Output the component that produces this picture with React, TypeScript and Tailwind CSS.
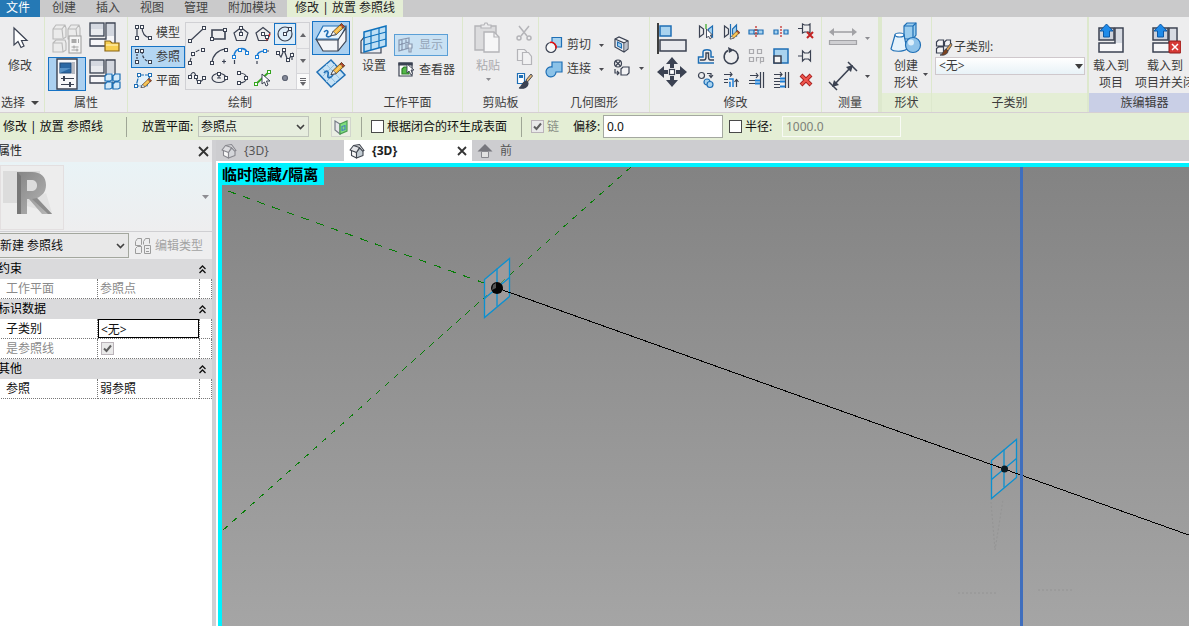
import type { ReactNode } from 'react';

const INK = '#3b4252';
const BLUE = '#1f6fb5';
const SKY = '#a9d3ef';
const FAINT = '#b4b4b8';

function Ico({ w = 18, h = 18, children }: { w?: number; h?: number; children: ReactNode }) {
  return (
    <svg width={w} height={h} viewBox={`0 0 ${w} ${h}`} fill="none" stroke={INK} strokeWidth="1.2" className="block shrink-0" aria-hidden="true">
      {children}
    </svg>
  );
}

function Node({ x, y, c = INK }: { x: number; y: number; c?: string }) {
  return <rect x={Math.floor(x) - 1.5} y={Math.floor(y) - 1.5} width="3" height="3" fill="#fff" stroke={c} strokeWidth="1" />;
}

function Pencil({ x, y, s = 1 }: { x: number; y: number; s?: number }) {
  return (
    <g transform={`translate(${x} ${y}) scale(${s})`} strokeWidth="0.8">
      <path d="M0 12 L2 8 L10 0.5 L13 3.5 L5 11 Z" fill="#f5b83d" stroke="#5b4630" />
      <path d="M8.5 2 L10 0.5 L13 3.5 L11.5 5 Z" fill="#b9452c" stroke="#5b4630" />
      <path d="M0 12 L2 8 L5 11 Z" fill="#fff" stroke="#3b4252" />
      <path d="M3.5 9.5 L10 3" stroke="#fbe2a4" />
    </g>
  );
}

function Caret({ faint = false }: { faint?: boolean }) {
  return (
    <svg width="5" height="3" viewBox="0 0 5 3" className="block shrink-0" aria-hidden="true">
      <path d="M0 0H5L2.5 3Z" fill={faint ? '#8d8d92' : '#4a4a50'} />
    </svg>
  );
}

function Chevron() {
  return (
    <svg width="9" height="6" viewBox="0 0 9 6" fill="none" stroke="#404040" strokeWidth="1.6" className="pointer-events-none absolute top-1/2 right-1 -translate-y-1/2" aria-hidden="true">
      <path d="M1 1L4.500 4.500L8 1" />
    </svg>
  );
}

function Panel({ title, width, children, foot = '', align = 'text-center' }: { title: ReactNode; width: string; children: ReactNode; foot?: string; align?: string }) {
  return (
    <section className={`flex shrink-0 flex-col border-r border-[#dde8cd] ${width}`}>
      <div className="flex h-[76px]">{children}</div>
      <div className={`h-[19px] leading-5 ${align} ${foot}`}>{title}</div>
    </section>
  );
}

function BoxesBase() {
  return (
    <g stroke={INK} strokeWidth="1.3">
      <rect x="2" y="2" width="14" height="13" fill="#d5d9e1" />
      <path d="M3 8h12v6H3Z" fill="#e9ebef" stroke="none" />
      <path d="M2 18h16V2h9v23H2Z" fill="#f7f7f9" />
      <path d="M19 3h7v12h-7Z" fill="#d3d7df" stroke="none" />
    </g>
  );
}

function TypePropsIcon() {
  return (
    <svg width="34" height="34" viewBox="0 0 34 34" fill="#ebebeb" stroke="#b9b9b9" strokeWidth="1.1" className="block shrink-0" aria-hidden="true">
      <path d="M3 7l3-4h9l1 3v9l-3 2H3ZM3 7h9l1 9M12 7l3-4" />
      <path d="M18 7l3-4h8l1 3v9l-3 2h-9ZM18 7h8l1 9M26 7l3-4" />
      <path d="M3 21l3-3h9l1 3v7l-3 2H3ZM3 21h9l1 9" />
      <rect x="19" y="14" width="12" height="17" fill="#f5f5f5" stroke="#a2a2a2" />
      <path d="M21.500 17h5v4h-5ZM28 17h1v4h-1Z" fill="#a9a9a9" stroke="none" />
      <path d="M21.500 25h7M21.500 28h7M24 23.500v3M27 26.500v3" stroke="#a2a2a2" />
    </svg>
  );
}

const drawTools: { name: string; icon: ReactNode }[] = [
  { name: '直线', icon: <Ico><path d="M2 16L16 3" /><Node x={2} y={16} /><Node x={16} y={3} /></Ico> },
  { name: '矩形', icon: <Ico><path d="M2 5h13v9H2Z" strokeWidth="1.600" /><Node x={15} y={5} /><Node x={2} y={14} /></Ico> },
  { name: '内接多边形', icon: <Ico><path d="M9 2.500L16 8L13.500 15.500H4.500L2 8Z M9 3v6" /><Node x={9} y={3} /><Node x={9} y={9} /></Ico> },
  { name: '外接多边形', icon: <Ico><path d="M9 2.500L16 8L13.500 15.500H4.500L2 8Z" /><path d="M9 9l4 4" /><path d="M16 9L12 16" stroke="#d22" strokeDasharray="3 1" strokeWidth="1.600" /><Node x={9} y={9} /><Node x={13} y={12} /></Ico> },
  { name: '圆形', icon: <Ico><circle cx="9" cy="9" r="7" /><path d="M9 9L14 4" /><Node x={9} y={9} /><Node x={14} y={4} /></Ico> },
  { name: '起点终点半径弧', icon: <Ico><path d="M2 15C3 8 8 3 15 2" strokeDasharray="4 2" /><Node x={2} y={16} /><Node x={5} y={7} /><Node x={15} y={3} /></Ico> },
  { name: '圆心端点弧', icon: <Ico><path d="M2 15C3 8 8 3 15 2" /><Node x={2} y={16} /><Node x={16} y={3} /><path d="M12 14.500h4M14 12.500v4" /></Ico> },
  { name: '相切弧', icon: <Ico><path d="M2.500 17v-4" /><path d="M2 9C3 0 13 0 15 5" stroke="#1c7ed6" strokeWidth="1.600" /><Node x={2} y={10} c="#1c7ed6" /><Node x={8} y={3} c="#1c7ed6" /><Node x={15} y={6} c="#1c7ed6" /></Ico> },
  { name: '圆角弧', icon: <Ico><path d="M3 17v-4M12 4h4" strokeDasharray="3 1" /><path d="M3 10C3 6 6 4 11 4" stroke="#1c7ed6" strokeWidth="1.600" /><Node x={3} y={10} c="#1c7ed6" /><Node x={11} y={4} c="#1c7ed6" /></Ico> },
  { name: '样条曲线', icon: <Ico><path d="M2 6L5 10L8 3L12 14L16 7V13" /><Node x={2} y={6} /><Node x={8} y={3} /><Node x={12} y={13} /><Node x={16} y={8} /></Ico> },
  { name: '通过点的样条曲线', icon: <Ico><path d="M2 8C4 2 7 2 8 8S12 15 16 9" /><Node x={2} y={8} /><Node x={8} y={8} /><Node x={11} y={13} /><Node x={16} y={9} /></Ico> },
  { name: '椭圆', icon: <Ico><ellipse cx="9" cy="9" rx="7" ry="4.500" /><path d="M9 9v-5M7 9h4" /><Node x={9} y={5} /><Node x={16} y={9} /></Ico> },
  { name: '半椭圆', icon: <Ico><path d="M7 4C17 4 17 14 7 14" /><Node x={7} y={4} /><Node x={14} y={9} /><Node x={7} y={14} /></Ico> },
  { name: '拾取线', icon: <Ico><path d="M2 15L15 3" stroke="#35a51f" strokeWidth="1.800" /><Node x={2} y={15} c="#35a51f" /><Node x={15} y={3} c="#35a51f" /><path d="M8 5v10l2.500-2 1.500 4 2-1-1.500-4H16Z" fill="#fff" strokeWidth="1" /></Ico> },
  { name: '点图元', icon: <Ico><circle cx="9" cy="9" r="2.500" fill="#858a99" stroke="#5d6372" /></Ico> },
];

const modifyTools: { name: string; icon: ReactNode }[] = [
  { name: '镜像拾取轴', icon: <Ico><path d="M2.500 3L6.500 6V11L2.500 14Z" fill="#eee" /><path d="M15.500 3L11.500 6V11L15.500 14Z" fill={SKY} stroke={BLUE} /><path d="M9 1v5" stroke="#35a51f" /><path d="M9.500 6v9l2-2 1.500 3 1.500-1-1-3h2Z" fill="#fff" strokeWidth="0.900" /></Ico> },
  { name: '镜像绘制轴', icon: <Ico><path d="M2.500 3L6.500 6V11L2.500 14Z" fill="#eee" /><path d="M14.500 2L10.500 6V11L14.500 13Z" fill={SKY} stroke={BLUE} /><path d="M8.500 1v14" stroke={BLUE} /><Pencil x={8} y={7} s={0.75} /></Ico> },
  { name: '拆分图元', icon: <Ico><path d="M2 7h5v4H2ZM11 7h5v4h-5Z" fill={SKY} stroke={BLUE} /><path d="M7 7h4M7 11h4" /><path d="M9 3v12" stroke="#c02020" strokeDasharray="2 1" /></Ico> },
  { name: '用间隙拆分', icon: <Ico><path d="M2 7h4v4H2ZM12 7h4v4h-4Z" fill={SKY} stroke={BLUE} /><path d="M9 3v12" stroke="#c02020" strokeDasharray="2 1" /></Ico> },
  { name: '解锁', icon: <Ico><path d="M1 5.500h4M5.500 1v9l2-1h4l1.500 1V1l-1.500 1h-4Z" /><path d="M10 9l6 6M16 9l-6 6" stroke="#c32222" strokeWidth="2" /></Ico> },
  { name: '偏移', icon: <Ico><path d="M17 10h-3V5c0-3-8-3-8 0v5H1.500v6H17" stroke={BLUE} strokeWidth="1.500" /><path d="M3 13h4c1.500 0 2-1 2-3V6h2.500v4c0 2 0.500 3 2 3H17" strokeWidth="1.400" /></Ico> },
  { name: '旋转', icon: <Ico><path d="M6 3.500A7 7 0 1 0 11 3" strokeWidth="1.500" /><path d="M6 0L12 3L7 6Z" fill={INK} stroke="none" /></Ico> },
  { name: '阵列', icon: <Ico><g stroke="#aaaaae"><path d="M2.500 2.500h4v4h-4ZM10.500 2.500h4v4h-4ZM2.500 10.500h4v4h-4ZM9.500 14.500v-4h3M13.500 16.500v-6h3v4h-3" /></g></Ico> },
  { name: '缩放', icon: <Ico><path d="M2 2h14v14H2Z" fill={SKY} stroke={BLUE} strokeWidth="1.500" /><path d="M2 9h7v7H2Z" fill="#f4f4f4" strokeWidth="1.500" /></Ico> },
  { name: '锁定', icon: <Ico><path d="M1 9h4M5.500 4v10l2-2h4l2 2V4l-2 2h-4Z" fill="#eee" /></Ico> },
  { name: '复制', icon: <Ico><circle cx="4.500" cy="4.500" r="3" /><circle cx="10" cy="11" r="3" stroke={BLUE} fill={SKY} /><circle cx="13" cy="13.500" r="3" stroke={BLUE} fill={SKY} /><path d="M10 2.500h4v3M12 4l2 2.500L16 4" /></Ico> },
  { name: '修剪为角', icon: <Ico><path d="M2 3.500h8M8 1l2 2.500-2 2M2 8.500h4M2 11.500h4M14.500 16V9M12.500 11l2-2.500 2 2.500" /><path d="M7 8h4v8M7 11.500h1V16" stroke="#1c7ed6" strokeWidth="1.500" /></Ico> },
  { name: '修剪单个图元', icon: <Ico><path d="M3 4.500h8M9 2l2 2.500L9 7M13.500 1v16M16.500 1v16M2 9.500h6M2 12.500h6" /><path d="M8 9.500h5M8 12.500h5" stroke="#1c7ed6" strokeWidth="1.800" /></Ico> },
  { name: '修剪多个图元', icon: <Ico><path d="M2 3.500h8M8 1l2 2.500-2 2M13.500 1v16M16.500 1v16M2 7.500h6M2 10.500h6M2 13.500h6M2 16.500h6" /><path d="M8 7.500h5M8 10.500h5M8 15.500h5" stroke="#1c7ed6" strokeWidth="1.800" /></Ico> },
  { name: '删除', icon: <Ico><path d="M4 4L14 14M14 4L4 14" stroke="#a51d1d" strokeWidth="4" /><path d="M4.500 4.500L13.500 13.500M13.500 4.500L4.500 13.500" stroke="#ee554d" strokeWidth="2.400" /></Ico> },
];

function ModeIcon({ dashed = false }: { dashed?: boolean }) {
  return (
    <Ico>
      <path d="M3 3v11" strokeDasharray={dashed ? '2 1' : undefined} />
      <path d="M8 3C8 9 11 13 16 14" strokeDasharray={dashed ? '3 1.500' : undefined} />
      <Node x={3} y={3} /><Node x={3} y={14} /><Node x={8} y={3} /><Node x={16} y={14} />
    </Ico>
  );
}

function LoadIcon({ close = false }: { close?: boolean }) {
  return (
    <Ico w={32} h={32}>
      <path d="M4 6h15v12H4Z" fill="#cdd2dc" strokeWidth="1.500" />
      <path d="M4 21h16V6h8v24H4Z" fill="#f6f6f8" strokeWidth="1.500" />
      <path d="M21 7h6v14h-6Z" fill="#d7dbe3" stroke="none" />
      <path d="M11.500 2L18 9H14.500V15H8.500V9H5Z" fill="#1f8bea" stroke="#0d58a5" strokeWidth="1" />
      {close && <><rect x="20" y="19" width="12" height="12" rx="1" fill="#d63a36" stroke="#8e1c1a" strokeWidth="1" /><path d="M23 22l6 6M29 22l-6 6" stroke="#fff" strokeWidth="1.500" /></>}
    </Ico>
  );
}

function Ribbon() {
  return (
    <div className="flex overflow-hidden border-b border-[#d6cfd3] bg-[#ededee] text-[#3c3c3c]">
      <Panel title={<button className="flex items-center gap-[6px] pl-px">选择 <svg width="8" height="4" viewBox="0 0 8 4" aria-hidden="true"><path d="M0 0h8L4 4Z" fill="#444" /></svg></button>} width="w-[45px]" align="text-left">
        <button className="flex w-10 flex-col items-center pt-[5px]">
          <Ico w={32} h={36}><path d="M10 6V23L14 19.500L17 25.500L20 24L17.500 18.500H23Z" fill="#fff" strokeWidth="1.200" /></Ico>
          <span>修改</span>
        </button>
      </Panel>

      <Panel title="属性" width="w-[83px]">
        <div className="grid w-full grid-cols-2 content-start px-[3px] pt-1">
          <button aria-label="类型属性" disabled className="flex h-9 items-center justify-center"><TypePropsIcon /></button>
          <button aria-label="族类别和族参数" className="flex h-9 items-start justify-center">
            <Ico w={34} h={32}><BoxesBase /><path d="M17 20h5l2 2h7v8H17Z" fill="#f7cf4f" stroke="#8a6515" /><path d="M18 24h12" stroke="#fff0b8" /></Ico>
          </button>
          <button aria-label="属性" className="flex h-[34px] items-center justify-center border border-[#1673c5] bg-[#abd0f0]">
            <Ico w={24} h={32}>
              <path d="M2 1h20v30H2Z" fill="#f7f7f9" strokeWidth="1.400" />
              <path d="M5 5h11v10H5Z" fill="#2b68a4" stroke="#254f7d" />
              <path d="M5 10h11l-11 5Z" fill="#5791c6" stroke="none" />
              <path d="M17 4h3v12h-3Z" fill="#b6b9c2" stroke="none" />
              <path d="M6 20.500h13M6 26.500h13" /><path d="M9 18v5M15 24v5" strokeWidth="2" />
            </Ico>
          </button>
          <button aria-label="族类型" className="flex h-[34px] items-center justify-center">
            <Ico w={34} h={32}><BoxesBase /><g fill="#d3e9f8" stroke="#1c6fb5" strokeWidth="1.200"><path d="M17 18l2-2h5v6l-2 1h-5ZM25 18l2-2h5v6l-2 1h-5ZM17 26l2-2h5v6l-2 1h-5ZM25 26l2-2h5v6l-2 1h-5Z" /></g></Ico>
          </button>
        </div>
      </Panel>

      <Panel title="绘制" width="w-[225px]">
        <div className="ml-[3px] flex w-[54px] shrink-0 flex-col gap-[2px] pt-[5px]">
          <button className="flex h-[22px] items-center gap-1 pl-[3px]"><ModeIcon />模型</button>
          <button className="flex h-[22px] items-center gap-1 border border-[#1673c5] bg-[#b4d6f2] pl-[2px]"><ModeIcon dashed />参照</button>
          <button className="flex h-[22px] items-center gap-1 pl-[3px]"><Ico><path d="M5 3H16L13 14H2Z" fill="#e4f1fa" stroke={BLUE} strokeDasharray="5 1" /><Node x={5} y={3} c={BLUE} /><Node x={16} y={3} c={BLUE} /><Node x={2} y={14} c={BLUE} /><Pencil x={7} y={6} s={0.8} /></Ico>平面</button>
        </div>
        <div className="mt-[5px] flex h-[68px] w-[125px] shrink-0 border border-[#d0d0d4]">
          <div className="grid w-[110px] grid-cols-5 grid-rows-3">
            {drawTools.map((t) => (
              <button key={t.name} aria-label={t.name} className={`flex items-center justify-center ${t.name === '圆形' ? 'border border-[#1673c5] bg-[#dcecf8]' : ''}`}>{t.icon}</button>
            ))}
          </div>
          <div className="flex flex-1 flex-col border-l border-[#d6d6da] text-[#66666b]">
            <button aria-label="上一行" className="flex flex-1 items-center justify-center"><svg width="6" height="4" viewBox="0 0 6 4"><path d="M0 4h6L3 0Z" fill="currentColor" /></svg></button>
            <button aria-label="下一行" className="flex flex-1 items-center justify-center border-y border-[#d6d6da]"><svg width="6" height="4" viewBox="0 0 6 4"><path d="M0 0h6L3 4Z" fill="currentColor" /></svg></button>
            <button aria-label="更多" className="flex h-[15px] items-center justify-center bg-[#fafafa]"><svg width="6" height="8" viewBox="0 0 6 8"><path d="M0 0h6v1H0ZM0 2h6v1H0ZM0 4h6L3 8Z" fill="currentColor" /></svg></button>
          </div>
        </div>
        <div className="flex flex-1 flex-col px-[2px] pt-1">
          <button aria-label="在面上绘制" className="flex h-[34px] items-center justify-center border border-[#1673c5] bg-[#abd0f0]">
            <Ico w={34} h={32}><path d="M2 17L9 4H32L26 17Z" fill="#e8f4fc" stroke={BLUE} /><path d="M2 17L9 29H24L32 19V6L24 18H3Z" fill="#f3f4f7" /><path d="M24 18v11" /><path d="M10 10c3-3 5-1 3 2s2 4 5 1" stroke={BLUE} strokeWidth="1.600" /><Pencil x={17} y={1} s={1.05} /></Ico>
          </button>
          <button aria-label="在工作平面上绘制" className="flex h-9 items-center justify-center">
            <Ico w={34} h={32}><path d="M3 15L17 3L31 18L17 30Z" fill="#c9e3f5" stroke={BLUE} strokeWidth="1.500" /><path d="M8 11l14 15M12 7l14 15M8 20l13-13M12 25l14-14" stroke="#8fc0e2" strokeWidth="1" /><path d="M10 16c3-4 5-1 4 2s2 4 5 0" stroke={BLUE} strokeWidth="1.600" /><Pencil x={17} y={5} s={1.05} /></Ico>
          </button>
        </div>
      </Panel>

      <Panel title="工作平面" width="w-[110px]">
        <button className="flex w-[41px] shrink-0 flex-col items-start pt-[5px] pl-1">
          <Ico w={32} h={36}><path d="M4 31V19l4-5h16v17Z" fill="#eaecf1" /><path d="M7 10L29 4V24L7 30Z" fill="#bfe0f5" stroke="#0f72bd" strokeWidth="1.500" /><path d="M14 8v20M22 6v20M7 16l22-6M7 23l22-6" stroke="#0f72bd" /></Ico>
          <span className="pl-[5px]">设置</span>
        </button>
        <div className="flex flex-col items-start gap-[2px] pt-[17px]">
          <button className="flex h-[22px] w-[54px] items-center gap-1 border border-[#5b9fd6] bg-[#c9e1f3] pl-[2px] text-[#96a5b8]">
            <Ico><g stroke="#8998b0"><path d="M2 4L12 2V12L2 15ZM2 9l10-3M5 3.500v11M9 2.500v10" /><path d="M11 8h4v4h-1v4h-2v-4h-1Z" fill="#e4eef7" /></g></Ico>显示
          </button>
          <button className="flex h-[22px] items-center gap-1 pt-px pl-[3px]">
            <Ico><path d="M2 2h13v13H2Z" fill="#fff" /><path d="M2 2h13v2H2Z" fill={INK} /><path d="M5 8l2-2h5v7H5Z" fill="#54b848" stroke="#2b7d26" /><path d="M10 3v9l2-2 2 4 1.500-1-1.500-4h3Z" fill="#fff" strokeWidth="0.900" /></Ico>查看器
          </button>
        </div>
      </Panel>

      <Panel title="剪贴板" width="w-[76px]">
        <button disabled className="flex w-[50px] shrink-0 flex-col items-center pt-[5px] text-[#ababaf]">
          <Ico w={32} h={36}><g stroke={FAINT}><path d="M3 4H24V28H3Z" fill="#dcdcde" strokeWidth="1.400" /><path d="M9 6V3h3l1-2h2l1 2h3v3Z" fill="#ececee" /><path d="M12 10h10l5 5v15H12Z" fill="#f6f6f7" strokeWidth="1.400" /><path d="M22 10v5h5" /></g></Ico>
          <span>粘贴</span><span className="pt-1"><Caret faint /></span>
        </button>
        <div className="flex flex-col gap-1 pt-[6px]">
          <button aria-label="剪切" disabled className="flex h-5 w-[22px] items-center justify-center"><Ico><g stroke={FAINT} strokeWidth="1.500"><path d="M4 2l8 10M14 2L6 12" /><circle cx="4" cy="14" r="2" /><circle cx="14" cy="14" r="2" /></g></Ico></button>
          <button aria-label="复制" disabled className="flex h-5 w-[22px] items-center justify-center"><Ico><g stroke={FAINT} fill="#f1f1f2"><path d="M2.500 1.500h7l2 2v9h-9Z" /><path d="M7.500 4.500h6l3 4v8h-9Z" /></g></Ico></button>
          <button aria-label="匹配类型" className="flex h-5 w-[22px] items-center justify-center"><Ico><path d="M2.500 1.500h7v10h-7Z" fill="#fff" stroke={BLUE} /><path d="M4 3h4v3H4Z" fill={BLUE} stroke="none" /><path d="M16 2L11 8L12.500 10L17.500 4Z" fill="#e4b775" strokeWidth="0.900" /><path d="M4 16c3 0 2-5 7-7l2 2c0 4-4 6-9 5Z" fill={INK} /></Ico></button>
        </div>
      </Panel>

      <Panel title="几何图形" width="w-[111px]">
        <div className="flex w-[74px] shrink-0 flex-col gap-1 pt-[18px] pl-[6px]">
          <button className="flex h-5 items-center gap-1"><Ico><path d="M7 1.500h9.500v9.500H7Z" fill={SKY} stroke={BLUE} /><circle cx="6" cy="11.500" r="5" fill="#f8f8f8" /><path d="M5 6.500a5 5 0 0 1 6 6" stroke="#e11" strokeWidth="1.500" /></Ico>剪切<span className="pl-1"><Caret /></span></button>
          <button className="flex h-5 items-center gap-1"><Ico><path d="M7 2h10v10H11A5 5 0 1 1 7 7Z" fill="#8bc2e8" stroke={BLUE} /></Ico>连接<span className="pl-1"><Caret /></span></button>
        </div>
        <div className="flex flex-col items-start gap-1 pt-[17px]">
          <button aria-label="拆分面" className="flex h-5 items-center"><Ico><path d="M2 4L6 2L15 6V14L11 17L2 12Z" fill="#f3f3f5" /><path d="M2 4L11 8V17M11 8L15 6" /><path d="M11.500 8.500L14.500 6.500V13.500L11.500 16Z" fill="#b9bfca" stroke="none" /><path d="M4.500 7L8.500 9V13L4.500 11Z" fill={SKY} stroke={BLUE} /></Ico></button>
          <button aria-label="几何操作" className="flex h-5 items-center gap-2"><Ico><circle cx="5" cy="4.500" r="3.500" /><path d="M2.500 2l5 5M7.500 2l-5 5" /><path d="M2 10v4h4M4 12l2 2-2 2" /><path d="M8 10l2-2h6v6l-2 2H8Z" fill="#f3f3f5" /></Ico><Caret /></button>
        </div>
      </Panel>

      <Panel title="修改" width="w-[172px]">
        <div className="flex w-[44px] shrink-0 flex-col items-center pt-1">
          <button aria-label="对齐" className="h-[35px]"><Ico w={32} h={34}><path d="M2 1V32" strokeWidth="1.600" stroke="#111" /><path d="M4 4H15V14H4Z" fill={SKY} stroke={BLUE} strokeWidth="1.500" /><path d="M4 18H30V29H4Z" fill="#e9eaee" strokeWidth="1.500" /></Ico></button>
          <button aria-label="移动" className="h-[34px]"><Ico w={32} h={34}><g fill={INK} stroke="none"><path d="M16 1L22 8H18V12H14V8H10Z" /><path d="M16 31L22 24H18V20H14V24H10Z" /><path d="M1 16L8 10V14H12V18H8V22Z" /><path d="M31 16L24 10V14H20V18H24V22Z" /></g><rect x="13.500" y="13.500" width="5" height="5" fill="#fff" /></Ico></button>
        </div>
        <div className="grid w-[125px] grid-cols-5 content-start gap-y-[3px] pt-[5px]">
          {modifyTools.map((t) => (
            <button key={t.name} aria-label={t.name} className="flex h-[21px] items-start pt-px pl-[3px]">{t.icon}</button>
          ))}
        </div>
      </Panel>

      <Panel title="测量" width="w-[60px] border-r-4">
        <div className="flex flex-col gap-1 pt-1 pl-[5px]">
          <button aria-label="测量距离" className="flex h-[34px] items-center gap-[6px]"><Ico w={32} h={30}><g stroke="#a2a2a6"><path d="M4 9h24" strokeWidth="1.600" /><path d="M2 9l5-4v8ZM30 9l-5-4v8Z" fill="#a2a2a6" stroke="none" /><path d="M2.500 17.500h27v4h-27Z" fill="#cfcfd2" /></g></Ico><Caret faint /></button>
          <button aria-label="尺寸标注" className="flex h-[34px] items-center gap-[6px]"><Ico w={32} h={32}><path d="M6 26L25 6" strokeWidth="1.600" /><path d="M5 27l2-7 5 5ZM26 5l-7 2 5 5Z" fill={INK} stroke="none" /><path d="M2 22L10 30M21 2L30 11" strokeWidth="1.500" /></Ico><Caret /></button>
        </div>
      </Panel>

      <Panel title="形状" width="w-[50px]" foot="bg-[#e4eed5]">
        <button className="flex items-end pl-[7px]">
          <span className="flex w-[34px] flex-col items-center self-start pt-[5px]">
            <Ico w={34} h={35}><path d="M15 4l3-3h9v12l-3 4H15Z" fill="#9bcdee" stroke={BLUE} /><path d="M15 4h9v12M24 4l3-3" stroke={BLUE} /><path d="M6 13L2 27c2 3 12 3 16 0L15 13Z" fill="#e5f2fb" stroke={BLUE} /><ellipse cx="10.500" cy="13" rx="4.500" ry="2" fill="#fff" stroke={BLUE} /><circle cx="24" cy="23" r="7.500" fill="#8fc3ea" stroke={BLUE} /><circle cx="22" cy="20.500" r="3" fill="#dceefa" stroke="none" /></Ico>
            <span className="leading-[17px]">创建</span><span className="leading-[17px]">形状</span>
          </span>
          <span className="pb-[17px]"><Caret /></span>
        </button>
      </Panel>

      <Panel title="子类别" width="w-[157px] border-r-2" foot="bg-[#e4eed5]">
        <div className="flex flex-1 flex-col pt-5 pr-[2px] pl-[3px]">
          <label htmlFor="subcat" className="flex h-5 items-center gap-px"><Ico><g fill="#f4f4f5"><path d="M1.500 4l2-2h5v6h-7ZM9.500 4l2-2h4v6h-6ZM1.500 10.500l2-1.500h5v6h-7Z" /></g><path d="M16 5l-5 6 2 2 4-6Z" fill="#d99a4e" strokeWidth="0.800" /><path d="M5 17c3 0 3-5 6-6l2 2c0 3-4 5-8 4Z" fill="#7b4320" strokeWidth="0.800" /></Ico>子类别:</label>
          <div className="relative">
            <select id="subcat" className="h-[18px] w-full appearance-none border border-[#cfc8cc] bg-gradient-to-b from-white to-[#e8f2f7] pl-[3px] leading-4"><option>&lt;无&gt;</option></select>
            <svg width="8" height="5" viewBox="0 0 8 5" className="pointer-events-none absolute top-[7px] right-[2px]" aria-hidden="true"><path d="M0 0h8L4 5Z" fill="#3c3c3c" /></svg>
          </div>
        </div>
      </Panel>

      <Panel title="族编辑器" width="w-[112px]" foot="bg-[#c9cfe6]">
        <button className="flex w-[44px] shrink-0 flex-col items-center pt-[5px]"><LoadIcon /><span className="pt-[3px] leading-[17px]">载入到<br />项目</span></button>
        <button className="flex w-[64px] shrink-0 flex-col items-center pt-[5px] whitespace-nowrap"><LoadIcon close /><span className="pt-[3px] leading-[17px]">载入到<br />项目并关闭</span></button>
      </Panel>
    </div>
  );
}

function Rule({ gap }: { gap: string }) {
  return <span className={`h-5 w-px shrink-0 bg-[#9fa696] ${gap}`} />;
}

function Tick({ id, on = false, disabled = false }: { id: string; on?: boolean; disabled?: boolean }) {
  return (
    <span className="relative block h-[13px] w-[13px] shrink-0">
      <input id={id} type="checkbox" defaultChecked={on} disabled={disabled} className="peer block h-[13px] w-[13px] appearance-none border border-[#4a4a4a] bg-white disabled:border-[#bbb4ba] disabled:bg-[#e9e9e9]" />
      <svg width="13" height="13" viewBox="0 0 13 13" fill="none" stroke="#5f5f5f" strokeWidth="2" className="pointer-events-none absolute inset-0 hidden peer-checked:block" aria-hidden="true"><path d="M3 6.500L5.500 9L10 3.500" /></svg>
    </span>
  );
}

function OptionsBar() {
  return (
    <div className="flex h-[27px] items-center overflow-hidden bg-[#e4eed5] whitespace-nowrap text-[#111]">
      <span className="w-[123px] shrink-0 pl-[3px]">修改 | 放置 参照线</span>
      <Rule gap="ml-[3px] mr-[15px]" />
      <label htmlFor="plane" className="w-14 shrink-0">放置平面:</label>
      <div className="relative w-[111px] shrink-0">
        <select id="plane" className="h-[21px] w-full appearance-none border border-[#bfc4bb] bg-[#e6edde] pl-[2px] text-[#111]"><option>参照点</option></select>
        <Chevron />
      </div>
      <Rule gap="ml-[11px] mr-[10px]" />
      <button aria-label="显示主体参照" className="flex h-5 w-5 shrink-0 items-center justify-center border border-[#d2d5cd] bg-[#eaefe3]"><Ico><path d="M3 3L8 6V16L3 12Z" fill="#e6e6ea" stroke="#777d88" /><path d="M8 6L15 3V13L8 16Z" fill="#7fe07f" stroke="#4c9c55" /><path d="M10 8.500l3-1v4l-3 1Z" stroke="#4a86b8" /></Ico></button>
      <Rule gap="ml-[10px] mr-[9px]" />
      <Tick id="surface" />
      <label htmlFor="surface" className="w-[134px] shrink-0 pl-[3px]">根据闭合的环生成表面</label>
      <Rule gap="ml-[3px] mr-[9px]" />
      <Tick id="chain" on disabled />
      <label htmlFor="chain" className="w-[29px] shrink-0 pl-[3px] text-[#8a8f85]">链</label>
      <label htmlFor="offset" className="w-[30px] shrink-0">偏移:</label>
      <input id="offset" defaultValue="0.0" className="h-[23px] w-[120px] shrink-0 border border-[#a4a8a0] bg-white px-[3px]" />
      <span className="w-[6px] shrink-0" />
      <Tick id="radius-on" />
      <label htmlFor="radius-on" className="w-10 shrink-0 pl-[3px]">半径:</label>
      <input id="radius" aria-label="半径值" disabled defaultValue="1000.0" className="h-[21px] w-[119px] shrink-0 border border-[#f8faf5] bg-[#e4eed5] px-[3px] text-[#7c8078]" />
    </div>
  );
}

function GroupRow({ name }: { name: string }) {
  return (
    <tr className="h-5 bg-[#dadadc]">
      <th colSpan={3} scope="colgroup" className="p-0 text-left font-normal">
        <button className="flex w-full items-center justify-between pr-[6px]">
          {name}
          <svg width="7" height="9" viewBox="0 0 7 9" fill="none" stroke="#111" strokeWidth="1.300" aria-hidden="true"><path d="M0.500 4L3.500 1L6.500 4M0.500 8L3.500 5L6.500 8" /></svg>
        </button>
      </th>
    </tr>
  );
}

function PropRow({ name, muted = false, children }: { name: string; muted?: boolean; children: ReactNode }) {
  return (
    <tr className={`h-5 ${muted ? 'text-[#8a8a8a]' : 'text-[#111]'}`}>
      <th scope="row" className="border-r border-b border-dotted border-[#777] p-0 pl-2 text-left font-normal">{name}</th>
      <td className="border-b border-dotted border-[#777] p-0">{children}</td>
      <td className="border-x border-b border-dotted border-[#777] p-0" />
    </tr>
  );
}

function Properties() {
  return (
    <aside className="-ml-[2px] w-[214px] shrink-0 bg-white">
      <div className="flex h-[22px] items-center justify-between bg-[#ececed] pr-[3px] text-[#222]">
        <h2>属性</h2>
        <button aria-label="关闭属性"><svg width="11" height="11" viewBox="0 0 11 11" stroke="#333" strokeWidth="1.800" className="block"><path d="M1 1l9 9M10 1l-9 9" /></svg></button>
      </div>
      <button aria-label="类型选择器" className="flex h-[70px] w-full items-center justify-between border-b border-[#cfcfd2] bg-gradient-to-b from-[#e9f3f6] to-[#eeeeef] pr-[3px]">
        <svg width="67" height="68" viewBox="0 0 67 68" aria-hidden="true">
          <defs>
            <linearGradient id="rg" x1="0" y1="0" x2="1" y2="1"><stop offset="0" stopColor="#858585" /><stop offset="1" stopColor="#b9b9b9" /></linearGradient>
          </defs>
          <rect x="2.500" y="2.500" width="63" height="64" fill="#ededed" stroke="#e3dfe0" />
          <path d="M5 8H42V40H5Z" fill="#dcdcdc" />
          <path d="M25 42L54 50L48 30Z" fill="#e2e2e2" />
          <path fillRule="evenodd" d="M19 9H34C43 9 48 14 48 22C48 29 44 33 39 35L54 51H44L31 36H29V51H19ZM29 17V28H33C37 28 39 26 39 22.500C39 19 37 17 33 17Z" fill="url(#rg)" />
          <path d="M19 9L23 13V51H19Z" fill="#777" /><path d="M39 35L54 51H50L34 36Z" fill="#8c8c8c" />
        </svg>
        <svg width="7" height="4" viewBox="0 0 7 4" aria-hidden="true"><path d="M0 0h7L3.500 4Z" fill="#8d8d92" /></svg>
      </button>
      <div className="flex h-[27px] items-center bg-[#eeeeef]">
        <div className="relative w-[131px]">
          <select aria-label="图元过滤器" className="block h-[25px] w-full appearance-none border border-[#a3a79e] bg-[#e8e8e8] pl-[1px] text-[#111]"><option>新建 参照线</option></select>
          <Chevron />
        </div>
        <button disabled className="flex items-center gap-[3px] pl-[5px] text-[#a3a3a3]">
          <Ico><g stroke="#9c9c9c" strokeWidth="1"><path d="M1.500 4.500l2-3h4v6l-1 1h-5ZM9.500 4.500l2-3h4v5M9.500 4.500v3M1.500 11.500l2-2h4v6l-1 1h-5Z" /><path d="M10.500 8.500h6v8h-6ZM12 11.500h3M12 14.500h3" /></g></Ico>编辑类型
        </button>
      </div>
      <table className="w-full table-fixed border-separate border-spacing-0">
        <colgroup><col className="w-[100px]" /><col /><col className="w-[13px]" /></colgroup>
        <tbody>
          <GroupRow name="约束" />
          <PropRow name="工作平面" muted><span className="pl-[2px]">参照点</span></PropRow>
          <GroupRow name="标识数据" />
          <PropRow name="子类别"><input aria-label="子类别值" defaultValue="<无>" className="block h-[19px] w-full border border-black bg-white px-[2px]" /></PropRow>
          <PropRow name="是参照线" muted><span className="block pl-[3px]"><Tick id="isref" on disabled /></span></PropRow>
          <GroupRow name="其他" />
          <PropRow name="参照"><span className="pl-[2px]">弱参照</span></PropRow>
        </tbody>
      </table>
    </aside>
  );
}

function HouseIcon({ faint = false }: { faint?: boolean }) {
  return (
    <svg width="16" height="16" viewBox="0 0 16 16" fill="none" stroke={faint ? '#88888e' : '#41464f'} strokeWidth="1.100" strokeLinejoin="round" className="block shrink-0" aria-hidden="true">
      <path d="M2.500 7V12.500L7.500 15V9Z" fill="#f8f8f8" />
      <path d="M7.500 9L11 5L14 8V12.500L7.500 15Z" fill={faint ? '#d4d6da' : '#c3ccd3'} />
      <path d="M1 7L4.500 2.500L10.500 1.500L15 7.500L13.500 8L10.500 4.500L7.500 9.500Z" fill={faint ? '#dddde0' : '#e6e7ea'} />
      <path d="M4.500 2.500L10.500 4.500" />
    </svg>
  );
}

function ReferencePlane({ x, y }: { x: number; y: number }) {
  return (
    <g transform={`translate(${x} ${y})`} stroke="#0b90d0" strokeWidth="1.300">
      <path d="M-12.500 -8L12.500 -29V9L-12.500 30Z" fill="#b5adac" fillOpacity="0.450" />
      <path d="M0 -19V19M-12.500 11L12.500 -10" />
    </g>
  );
}

function Workspace() {
  return (
    <main className="flex min-w-0 flex-1 flex-col border-l-4 border-[#d0d0d3] bg-white">
      <div role="tablist" className="flex h-[21px] shrink-0 items-stretch bg-[#cdcdd0] text-[#555]">
        <button role="tab" className="flex w-[128px] items-center gap-[7px] pl-[5px]"><HouseIcon faint />{'{3D}'}</button>
        <div className="flex w-[128px] items-center justify-between bg-white pr-[5px] pl-[5px]">
          <button role="tab" aria-selected="true" className="flex items-center gap-[7px] font-bold text-[#222]"><HouseIcon />{'{3D}'}</button>
          <button aria-label="关闭视图"><svg width="10" height="10" viewBox="0 0 10 10" stroke="#333" strokeWidth="1.800" className="block"><path d="M1 1l8 8M9 1l-8 8" /></svg></button>
        </div>
        <button role="tab" className="flex items-center gap-[7px] pl-[5px]"><svg width="16" height="16" viewBox="0 0 16 16" aria-hidden="true"><path d="M8 1L15.500 8.500H0.500Z" fill="#77777d" /><path d="M4.500 8.500h7v6h-7Z" fill="#e2e2e2" stroke="#88888e" /></svg>前</button>
      </div>
      <div className="relative mt-[2px] ml-[2px] flex flex-1 flex-col overflow-hidden border-t-4 border-l-4 border-[#00f2ff] bg-gradient-to-b from-[#838383] to-[#a5a5a5]">
        <svg width="100%" height="100%" fill="none" className="absolute inset-0" aria-label="三维视图">
          <g transform="translate(-222 -167)">
            <path d="M228 191L484 283" stroke="#067d06" strokeWidth="1" strokeDasharray="8 7.600" shapeRendering="crispEdges" />
            <path d="M631 167L222 531" stroke="#067d06" strokeWidth="1" strokeDasharray="6 6" shapeRendering="crispEdges" />
            <ReferencePlane x={497} y={287.5} />
            <ReferencePlane x={1004} y={468.5} />
            <path d="M497 288L1004 469L2264 919" stroke="#000" strokeWidth="1" shapeRendering="crispEdges" />
            <path d="M991 502l4 48 8-50M958 593h38M1038 590h35" stroke="#949494" strokeWidth="1" strokeDasharray="2 2" />
            <rect x="1020" y="167" width="3" height="3000" fill="#3f6ebd" />
            <circle cx="497" cy="288" r="6" fill="#050505" /><path d="M493 285l3-2v5l-4 2Z" fill="#555" />
            <circle cx="1004.500" cy="469" r="3.500" fill="#0b1a22" />
          </g>
        </svg>
        <span className="relative -mt-1 h-[22px] self-start bg-[#00f2ff] pr-[6px] text-[15px] leading-[22px] font-bold text-black">临时隐藏/隔离</span>
      </div>
    </main>
  );
}

export default function App() {
  return (
    <div className="flex min-h-screen flex-col overflow-hidden bg-[#d0d0d3] font-['Noto_Sans','Noto_Sans_CJK_SC',sans-serif] text-xs leading-4">
      <nav className="flex h-[17px] shrink-0 bg-[#cacacb] leading-[15px] whitespace-nowrap text-[#444]">
        <a href="#file" className="mr-[2px] w-10 bg-[#2579b5] pl-[6px] text-white">文件</a>
        {['创建', '插入', '视图', '管理', '附加模块'].map((t) => (
          <a key={t} href={`#${t}`} className="px-[10px]">{t}</a>
        ))}
        <a href="#modify" className="ml-px bg-[#e4eed5] px-2 text-[#222]">修改 | 放置 参照线</a>
      </nav>
      <Ribbon />
      <OptionsBar />
      <div className="flex flex-1">
        <Properties />
        <Workspace />
      </div>
    </div>
  );
}
